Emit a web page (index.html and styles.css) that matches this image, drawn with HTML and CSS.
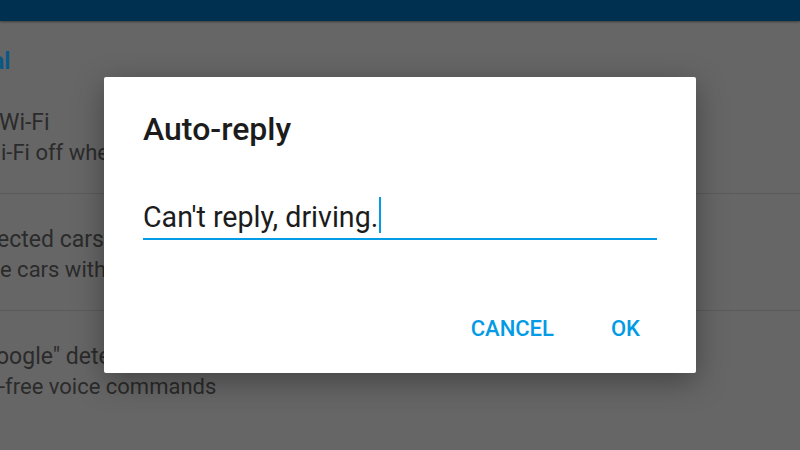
FILE: index.html
```html
<!DOCTYPE html>
<html lang="en">
<head>
    <meta charset="UTF-8">
    <meta name="viewport" content="width=device-width, initial-scale=1.0">
    <title>Auto-reply</title>
    <link rel="stylesheet" href="styles.css">
</head>
<body>
    <div class="app-bar"></div>

    <div class="settings">
        <div class="section-title">al</div>

        <div class="setting-item">
            <div class="setting-name shift-1">Wi-Fi</div>
            <div class="setting-desc shift-2">i-Fi off when driving</div>
        </div>
        <div class="setting-item">
            <div class="setting-name shift-3">ected cars</div>
            <div class="setting-desc">e cars with Android Auto</div>
        </div>
        <div class="setting-item last">
            <div class="setting-name shift-4">oogle" detection</div>
            <div class="setting-desc shift-1">-free voice commands</div>
        </div>
    </div>

    <div class="dialog">
        <div class="dialog-title">Auto-reply</div>
        <div class="dialog-input">Can't reply, driving.<span class="caret"></span></div>
        <div class="dialog-actions">
            <button class="dialog-button">CANCEL</button>
            <button class="dialog-button">OK</button>
        </div>
    </div>
</body>
</html>
```

FILE: styles.css
```css
body {
    margin: 0;
    width: 800px;
    height: 450px;
    overflow: hidden;
    background-color: #666666;
    font-family: Roboto, "Noto Sans", sans-serif;
}

.app-bar {
    height: 21px;
    background-color: #00304f;
    box-shadow: 0 1px 2px rgba(0, 0, 0, 0.4);
}

.settings {
    color: #2b2b2b;
    white-space: nowrap;
}

.section-title {
    padding-top: 26px;
    font-size: 23px;
    line-height: 30px;
    font-weight: bold;
    color: #0a5889;
    margin-left: -8px;
}

.setting-item {
    padding: 31px 0 25px;
    border-bottom: 1px solid #5a5a5a;
}

.setting-item.last {
    border-bottom: none;
}

.setting-name {
    font-size: 23px;
    line-height: 30px;
}

.setting-desc {
    font-size: 22px;
    line-height: 30px;
}

.shift-1 {
    margin-left: -1px;
}

.shift-2 {
    margin-left: 1px;
}

.shift-3 {
    margin-left: -3px;
}

.shift-4 {
    margin-left: -4px;
}

.dialog {
    position: absolute;
    left: 104px;
    top: 77px;
    width: 592px;
    height: 296px;
    box-sizing: border-box;
    padding: 32px 39px 0;
    background-color: #ffffff;
    border-radius: 2px;
    box-shadow: 0 8px 30px rgba(0, 0, 0, 0.35);
}

.dialog-title {
    font-size: 32px;
    line-height: 40px;
    font-weight: 500;
    color: #1c1c1c;
}

.dialog-input {
    margin-top: 50px;
    padding-bottom: 3px;
    font-size: 28.6px;
    line-height: 36px;
    color: #1c1c1c;
    border-bottom: 2px solid #039be5;
}

.caret {
    display: inline-block;
    vertical-align: top;
    width: 2px;
    height: 36px;
    margin-top: -2px;
    margin-left: 1px;
    background-color: #039be5;
}

.dialog-actions {
    display: flex;
    justify-content: flex-end;
    gap: 57px;
    margin-top: 76px;
    padding-right: 17px;
}

.dialog-button {
    padding: 0;
    border: none;
    background: none;
    font-family: Roboto, "Noto Sans", sans-serif;
    font-size: 22px;
    line-height: 26px;
    font-weight: 500;
    color: #039be5;
    cursor: pointer;
}
```
